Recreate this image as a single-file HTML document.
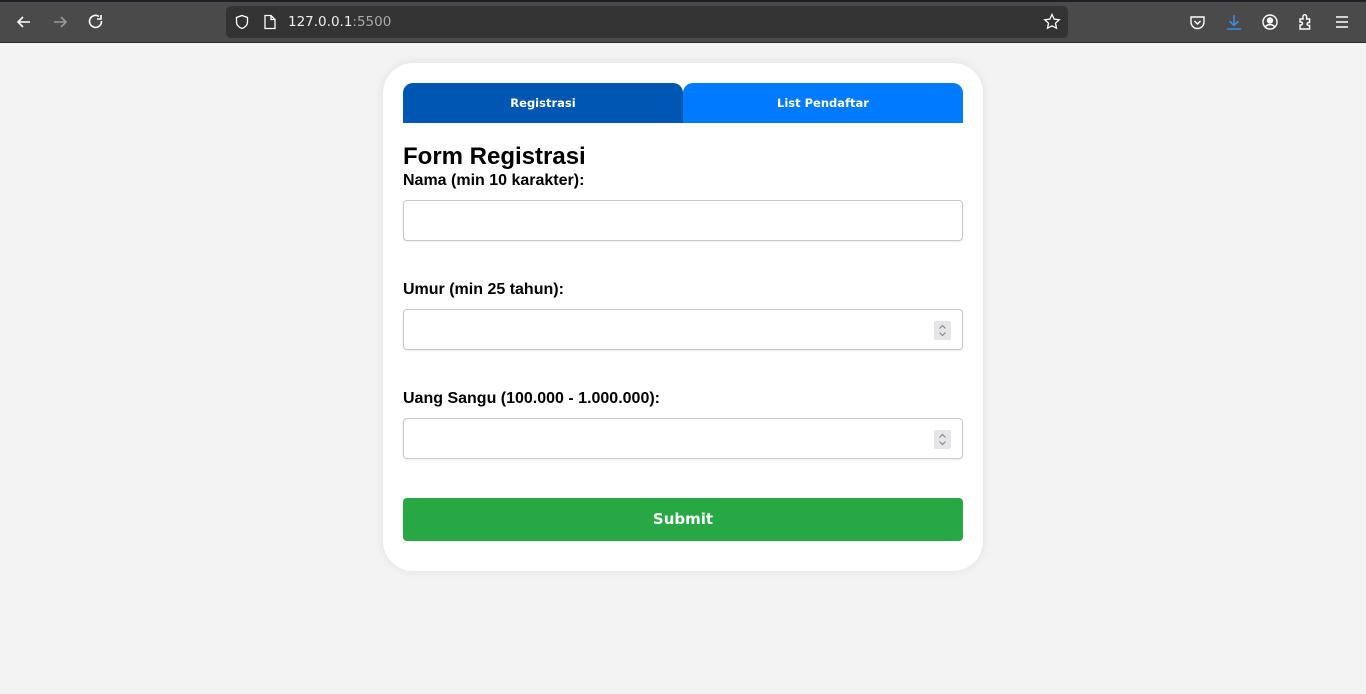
<!DOCTYPE html>
<html><head><style>
*{box-sizing:border-box;margin:0;padding:0}
body{width:1366px;height:694px;background:#f3f3f3;font-family:"Liberation Sans",Arial,sans-serif;position:relative;overflow:hidden}
.top{position:absolute;left:0;top:0;width:1366px;height:43px;background:#4a4a4a;border-top:2px solid #1f1e24;border-bottom:1px solid #2a2a2a}
.url{position:absolute;left:226px;top:4px;width:842px;height:32px;background:#333;border-radius:5px}
.url span{position:absolute;left:62px;top:8px;color:#eee;font-size:14px;font-family:"DejaVu Sans",sans-serif;font-size:13.5px}
.ic{position:absolute}
.card{position:absolute;left:383px;top:63px;width:600px;height:508px;background:#fff;border-radius:30px;box-shadow:0 0 10px rgba(0,0,0,.08)}
.tab{position:absolute;top:20px;height:40px;width:280px;border-radius:10px 10px 0 0;color:#fff;font-family:"DejaVu Sans",sans-serif;font-weight:bold;font-size:11.5px;text-align:center;line-height:40px}
h2{position:absolute;left:20px;top:80px;font-size:24px;font-weight:bold;color:#000}
label{position:absolute;left:20px;font-size:16px;font-weight:bold;color:#000}
.in{position:absolute;left:20px;width:560px;height:41px;border:1px solid #c8c8c8;border-radius:4px;box-shadow:0 1px 2px rgba(0,0,0,.08)}
.sp{position:absolute;right:11px;top:11px;width:17px;height:19px;background:#e6e6ea;border-radius:2px}
.btn{position:absolute;left:20px;top:435px;width:560px;height:43px;background:#28a745;border-radius:4px;color:#fff;font-family:"DejaVu Sans",sans-serif;font-weight:bold;font-size:15px;text-align:center;line-height:43px}
</style></head><body>
<div class="top">
<svg class="ic" style="left:14px;top:10px" width="20" height="20" viewBox="0 0 20 20" fill="none" stroke="#fff" stroke-width="1.6"><path d="M16 10H4M9 5l-5 5 5 5"/></svg>
<svg class="ic" style="left:50px;top:10px" width="20" height="20" viewBox="0 0 20 20" fill="none" stroke="#999" stroke-width="1.6"><path d="M4 10h12M11 5l5 5-5 5"/></svg>
<svg class="ic" style="left:86px;top:10px" width="20" height="20" viewBox="0 0 20 20" fill="none" stroke="#fff" stroke-width="1.6"><path d="M15.5 9A6 6 0 1 1 13 4.5M15 3v4h-4"/></svg>
<div class="url"><span>127.0.0.1<span style="position:static;color:#aaa">:5500</span></span>
<svg class="ic" style="left:8px;top:8px" width="16" height="16" viewBox="0 0 16 16" fill="none" stroke="#fff" stroke-width="1.3"><path d="M8 1.5l5.5 2v4.5c0 3-2.5 5.5-5.5 6.5C5 13.5 2.5 11 2.5 8V3.5z"/></svg>
<svg class="ic" style="left:37px;top:8px" width="14" height="16" viewBox="0 0 14 16" fill="none" stroke="#fff" stroke-width="1.3"><path d="M2 1.5h6l4 4v9H2zM8 1.5v4h4"/></svg>
<svg class="ic" style="left:817px;top:7px" width="18" height="18" viewBox="0 0 18 18" fill="none" stroke="#fff" stroke-width="1.3"><path d="M9 1.5l2.2 4.6 5 .6-3.7 3.5 1 5L9 12.8 4.5 15.2l1-5L1.8 6.7l5-.6z"/></svg>
</div>
<svg class="ic" style="left:1189px;top:12px" width="17" height="17" viewBox="0 0 17 17" fill="none" stroke="#fff" stroke-width="1.4"><path d="M2 3h13v5a6.5 6.5 0 0 1-13 0zM5.5 7l3 3 3-3"/></svg>
<svg class="ic" style="left:1225px;top:11px" width="18" height="18" viewBox="0 0 18 18" fill="none" stroke="#3a8ee6" stroke-width="1.5"><path d="M9 2v10M4.5 8l4.5 4.5L13.5 8M2 16h14"/></svg>
<svg class="ic" style="left:1261px;top:11px" width="18" height="18" viewBox="0 0 18 18" fill="none" stroke="#fff" stroke-width="1.4"><circle cx="9" cy="9" r="7"/><circle cx="9" cy="7.5" r="2.5" fill="#fff"/><path d="M4.5 13.5c2.5-2.5 6.5-2.5 9 0" /></svg>
<svg class="ic" style="left:1297px;top:11px" width="18" height="18" viewBox="0 0 18 18" fill="none" stroke="#fff" stroke-width="1.4"><path d="M3 6h3V3.5a1.8 1.8 0 0 1 3.6 0V6h3v3.5h-1a1.5 1.5 0 0 0 0 3h1V16H3v-4h1a1.5 1.5 0 0 0 0-3H3z"/></svg>
<svg class="ic" style="left:1334px;top:12px" width="16" height="16" viewBox="0 0 16 16" fill="none" stroke="#fff" stroke-width="1.4"><path d="M2 3h12M2 8h12M2 13h12"/></svg>
</div>
<div class="card">
<div class="tab" style="left:20px;background:#0056b3">Registrasi</div>
<div class="tab" style="left:300px;background:#007bff">List Pendaftar</div>
<h2>Form Registrasi</h2>
<label style="top:109px">Nama (min 10 karakter):</label>
<div class="in" style="top:137px"></div>
<label style="top:218px">Umur (min 25 tahun):</label>
<div class="in" style="top:246px"><div class="sp"><svg width="17" height="19" viewBox="0 0 17 19" fill="none" stroke="#888" stroke-width="1.2"><path d="M5.5 7.5l3-3 3 3M5.5 11.5l3 3 3-3"/></svg></div></div>
<label style="top:327px">Uang Sangu (100.000 - 1.000.000):</label>
<div class="in" style="top:355px"><div class="sp"><svg width="17" height="19" viewBox="0 0 17 19" fill="none" stroke="#888" stroke-width="1.2"><path d="M5.5 7.5l3-3 3 3M5.5 11.5l3 3 3-3"/></svg></div></div>
<div class="btn">Submit</div>
</div>
</body></html>
